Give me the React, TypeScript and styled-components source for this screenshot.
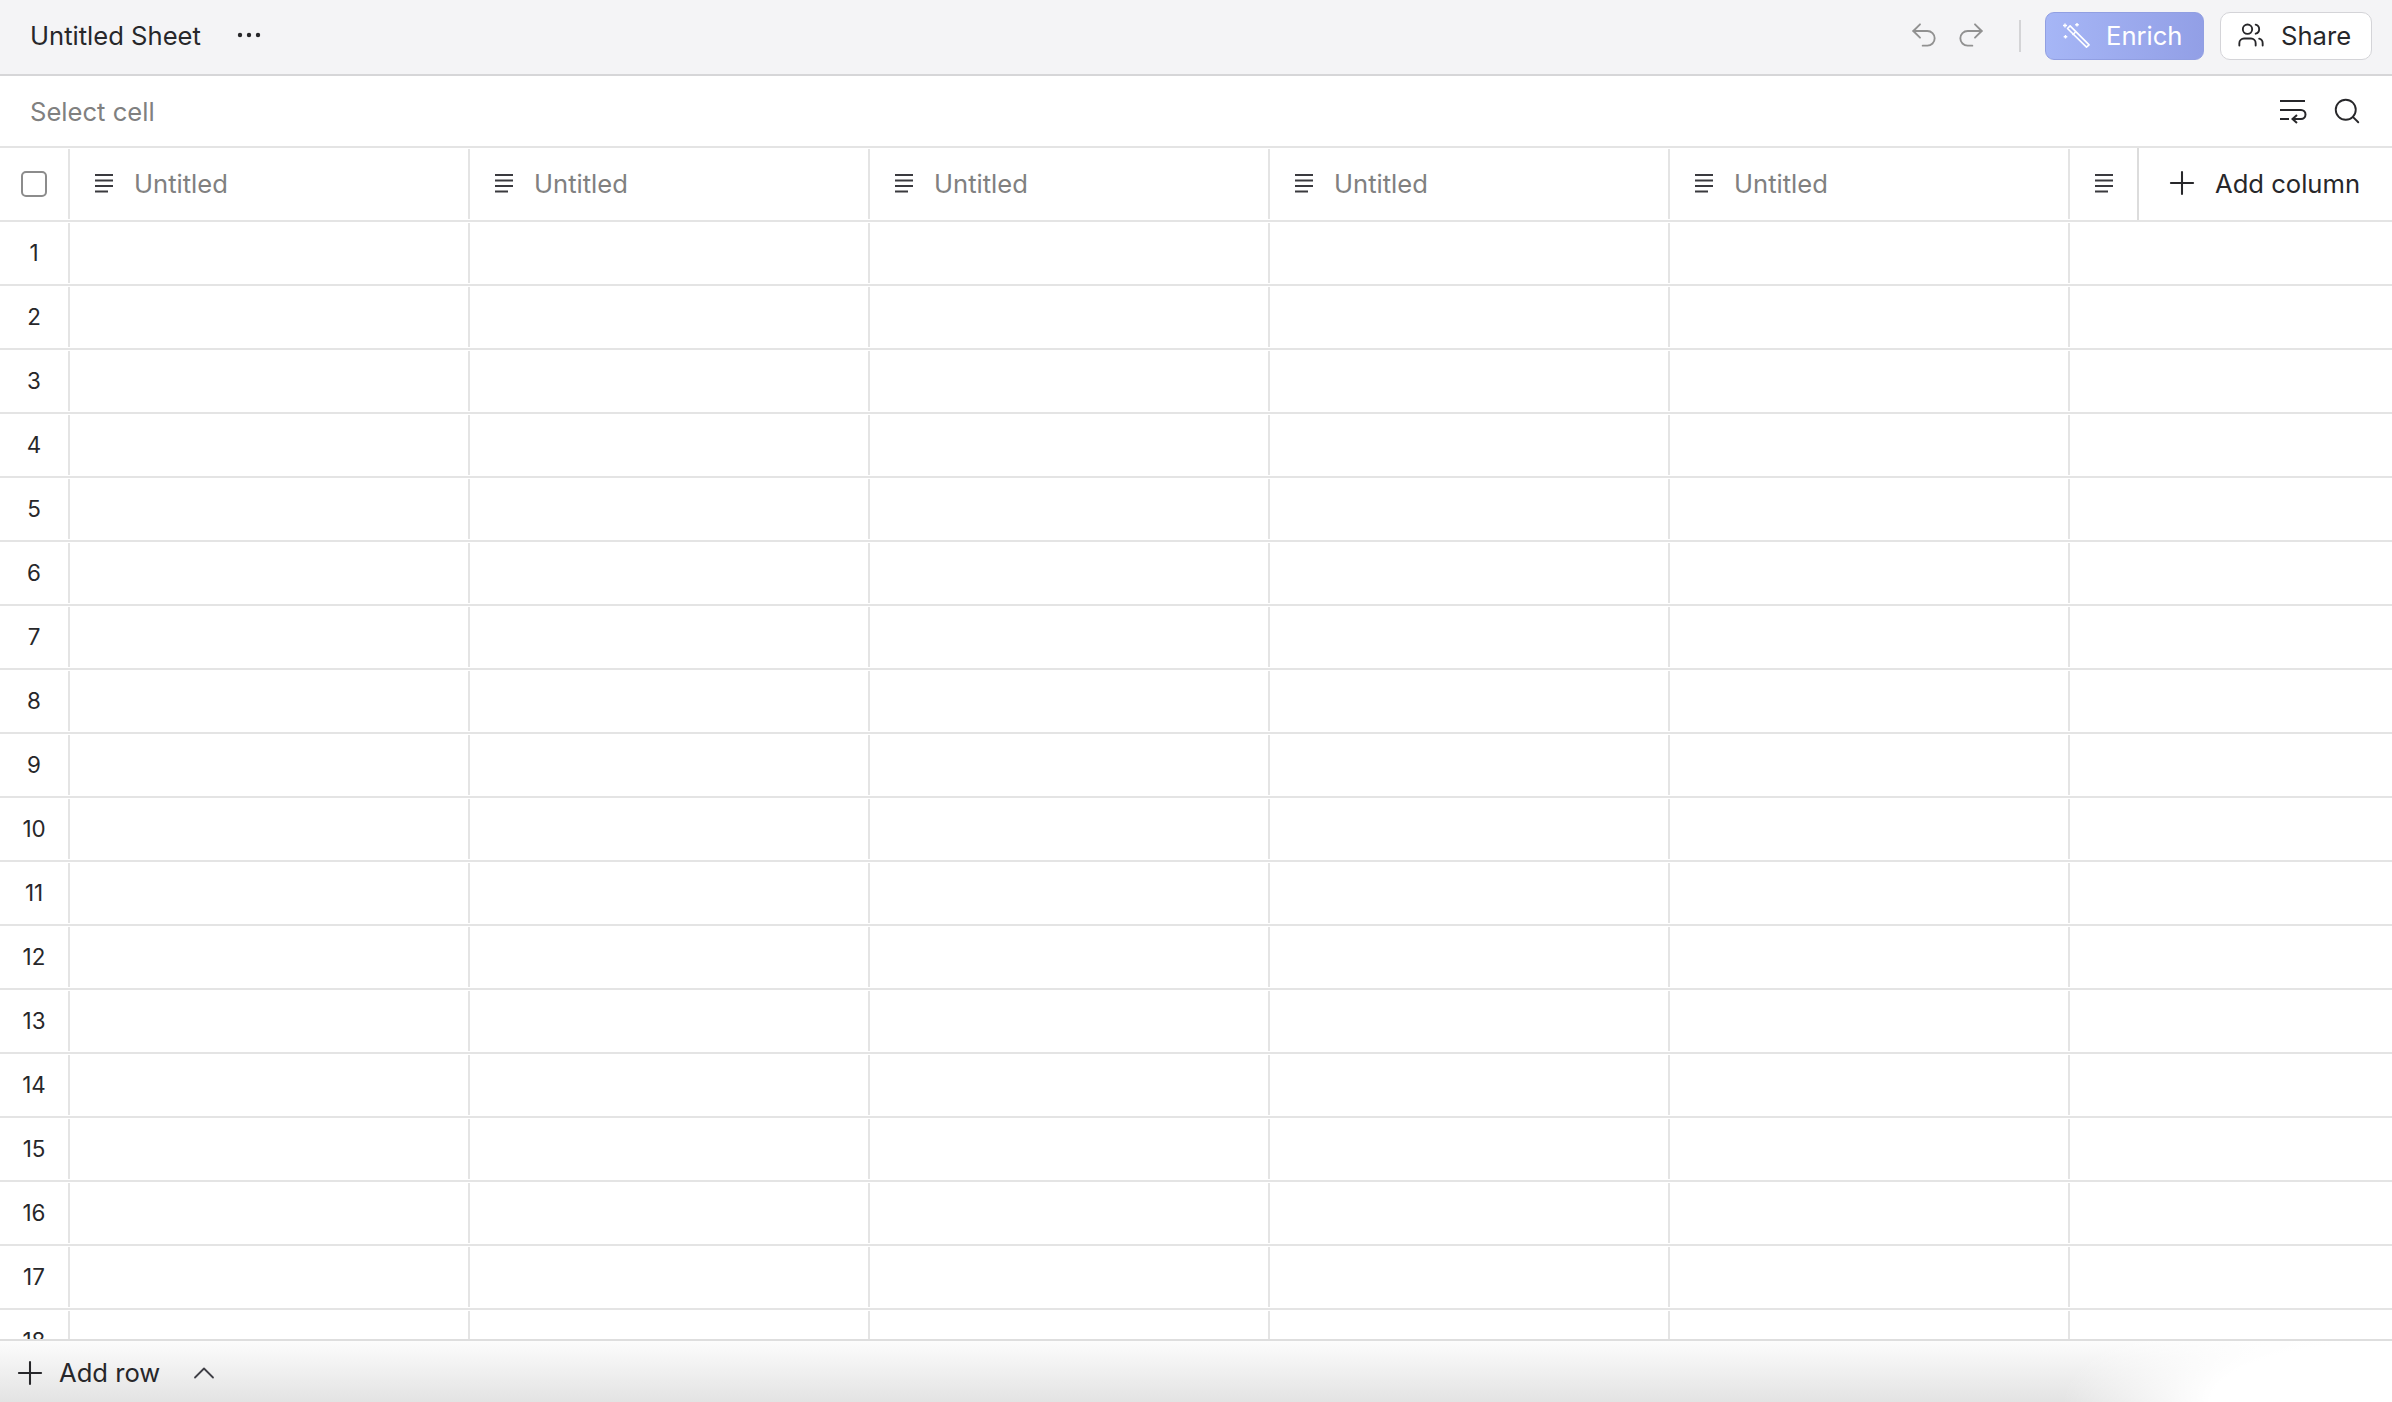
import React from "react";
import styled, { createGlobalStyle } from "styled-components";
import { Undo2, Redo2, Users, Search, Plus, ChevronUp } from "lucide-react";

const Global = createGlobalStyle`
  html, body { margin: 0; padding: 0; background: #fff; overflow: hidden; }
  * { box-sizing: border-box; }
  body { font-family: Inter, "Liberation Sans", sans-serif; color: #27272a; }
`;

const Page = styled.div`
  width: 2392px;
  height: 1402px;
  display: flex;
  flex-direction: column;
  overflow: hidden;
`;

const TopBar = styled.header`
  flex: 0 0 76px;
  display: flex;
  align-items: center;
  background: #f4f4f6;
  border-bottom: 2px solid #d6d6d8;
  padding: 0 20px 2px 30px;
`;

const Title = styled.span`
  font-size: 25.6px;
  color: #27272a;
  margin-bottom: 2px;
`;

const Dots = styled.svg`
  width: 24px;
  height: 6px;
  margin-left: 36px;
  margin-bottom: 2px;
  fill: #27272a;
`;

const Spacer = styled.div`
  flex: 1;
`;

const HistoryIcons = styled.div`
  display: flex;
  gap: 15px;
  color: #919191;
  margin: 0 32px 2px 0;
`;

const Divider = styled.div`
  width: 2px;
  height: 32px;
  background: #d4d4d6;
  margin-right: 24px;
`;

const EnrichButton = styled.div`
  width: 159px;
  height: 48px;
  display: flex;
  align-items: center;
  gap: 14px;
  padding: 0 0 2px 16px;
  border-radius: 9px;
  border: 1px solid #919fe2;
  background: linear-gradient(90deg, #a6b6f6, #929fe6);
  color: #fff;
  font-size: 25.6px;
  margin-right: 16px;
`;

const ShareButton = styled.div`
  width: 152px;
  height: 48px;
  display: flex;
  align-items: center;
  gap: 16px;
  padding: 0 0 2px 16px;
  border-radius: 10px;
  border: 1.5px solid #d4d4d8;
  background: #fff;
  color: #27272a;
  font-size: 25.6px;
`;

const FormulaBar = styled.div`
  flex: 0 0 72px;
  display: flex;
  align-items: center;
  padding: 0 30px;
  border-bottom: 2px solid #e4e4e4;
  background: #fff;
`;

const Placeholder = styled.span`
  font-size: 25.6px;
  color: #808080;
`;

const ToolIcons = styled.div`
  display: flex;
  align-items: center;
  gap: 25px;
  color: #27272a;
`;

const Sheet = styled.div`
  flex: 1;
  min-height: 0;
  overflow: hidden;
`;

const Row = styled.div<{ $header?: boolean }>`
  display: flex;
  height: ${(p) => (p.$header ? "74px" : "64px")};
  border-bottom: 2px solid #e4e4e4;
`;

const IndexCell = styled.div`
  flex: 0 0 70px;
  display: flex;
  align-items: center;
  justify-content: center;
  padding: 0 2px 2px 0;
  position: relative;
  font-size: 22.4px;
  color: #27272a;
  &::after {
    content: "";
    position: absolute;
    right: 0;
    top: 1px;
    bottom: 1px;
    width: 2px;
    background: #e4e4e4;
  }
`;

const Cell = styled.div<{ $last?: boolean }>`
  flex: ${(p) => (p.$last ? "1 1 0" : "0 0 400px")};
  min-width: 0;
  display: flex;
  align-items: center;
  gap: 20px;
  padding: 0 0 2px 24px;
  position: relative;
  font-size: 25.6px;
  color: #808080;
  &::after {
    content: "";
    display: ${(p) => (p.$last ? "none" : "block")};
    position: absolute;
    right: 0;
    top: 1px;
    bottom: 1px;
    width: 2px;
    background: #e4e4e4;
  }
`;

const AddColumn = styled.div`
  flex: 0 0 255px;
  display: flex;
  align-items: center;
  gap: 14px;
  padding: 0 0 2px 24px;
  border-left: 2px solid #dcdcdc;
  color: #27272a;
  font-size: 25.6px;
`;

const CheckBox = styled.div`
  width: 26px;
  height: 26px;
  margin-top: 2px;
  border: 2.5px solid #8c8c8c;
  border-radius: 5px;
  background: #fff;
`;

const Footer = styled.footer`
  flex: 0 0 63px;
  display: flex;
  align-items: center;
  gap: 10px;
  padding-left: 11px;
  padding-top: 2px;
  border-top: 2px solid #dedede;
  font-size: 25.6px;
  color: #27272a;
  background:
    radial-gradient(ellipse 330px 110px at 100% 100%, #fff 55%, rgba(255, 255, 255, 0) 100%),
    linear-gradient(180deg, #fcfcfc, #e3e3e3);
`;

const Chevron = styled.span`
  display: flex;
  margin-left: 16px;
  color: #3f3f46;
`;

const LinesSvg = styled.svg`
  flex: none;
  width: 20px;
  height: 20px;
  stroke: #3a3a3f;
  stroke-width: 2;
  fill: none;
`;

const Lines = () => (
  <LinesSvg viewBox="0 0 20 20">
    <path d="M1 2h18M1 7.5h18M1 13h18M1 18.5h13" />
  </LinesSvg>
);

const WandSvg = styled.svg`
  flex: none;
  width: 30px;
  height: 28px;
  color: #fff;
`;

const Wand = () => (
  <WandSvg viewBox="0 0 30 28" fill="none" stroke="currentColor" strokeWidth="1.6" strokeLinejoin="round">
    <path d="M6.5 10.5l2.6-2.6 19 19-2.6 2.2z" transform="translate(-1 -3)" />
    <path d="M10.5 14l3-3" />
    <path d="M3 2.5v4M1 4.5h4M15 2v3.5M13.2 3.7h3.6M3.5 14v3.5M1.7 15.7h3.6" strokeWidth="1.4" />
  </WandSvg>
);

const WrapSvg = styled.svg`
  width: 28px;
  height: 26px;
`;

const Wrap = () => (
  <WrapSvg viewBox="0 0 28 26" fill="none" stroke="currentColor" strokeWidth="2">
    <path d="M1 3h25M1 12h21a4.5 4.5 0 0 1 0 9h-8M18 17l-4.5 4 4.5 4M1 21h9" />
  </WrapSvg>
);

const cols = [0, 1, 2, 3, 4];
const rows = Array.from({ length: 18 }, (_, i) => i + 1);

export default function App() {
  return (
    <Page>
      <Global />
      <TopBar>
        <Title>Untitled Sheet</Title>
        <Dots viewBox="0 0 24 6">
          <circle cx="3" cy="3" r="2.2" />
          <circle cx="12" cy="3" r="2.2" />
          <circle cx="21" cy="3" r="2.2" />
        </Dots>
        <Spacer />
        <HistoryIcons>
          <Undo2 size={32} strokeWidth={1.4} />
          <Redo2 size={32} strokeWidth={1.4} />
        </HistoryIcons>
        <Divider />
        <EnrichButton>
          <Wand />
          Enrich
        </EnrichButton>
        <ShareButton>
          <Users size={28} strokeWidth={1.6} />
          Share
        </ShareButton>
      </TopBar>
      <FormulaBar>
        <Placeholder>Select cell</Placeholder>
        <Spacer />
        <ToolIcons>
          <Wrap />
          <Search size={30} strokeWidth={1.5} />
        </ToolIcons>
      </FormulaBar>
      <Sheet>
        <Row $header>
          <IndexCell>
            <CheckBox />
          </IndexCell>
          {cols.map((c) => (
            <Cell key={c}>
              <Lines />
              Untitled
            </Cell>
          ))}
          <Cell $last>
            <Lines />
          </Cell>
          <AddColumn>
            <Plus size={38} strokeWidth={1.3} />
            Add column
          </AddColumn>
        </Row>
        {rows.map((r) => (
          <Row key={r}>
            <IndexCell>{r}</IndexCell>
            {cols.map((c) => (
              <Cell key={c} />
            ))}
            <Cell $last />
          </Row>
        ))}
      </Sheet>
      <Footer>
        <Plus size={38} strokeWidth={1.3} />
        Add row
        <Chevron>
          <ChevronUp size={36} strokeWidth={1.2} />
        </Chevron>
      </Footer>
    </Page>
  );
}
